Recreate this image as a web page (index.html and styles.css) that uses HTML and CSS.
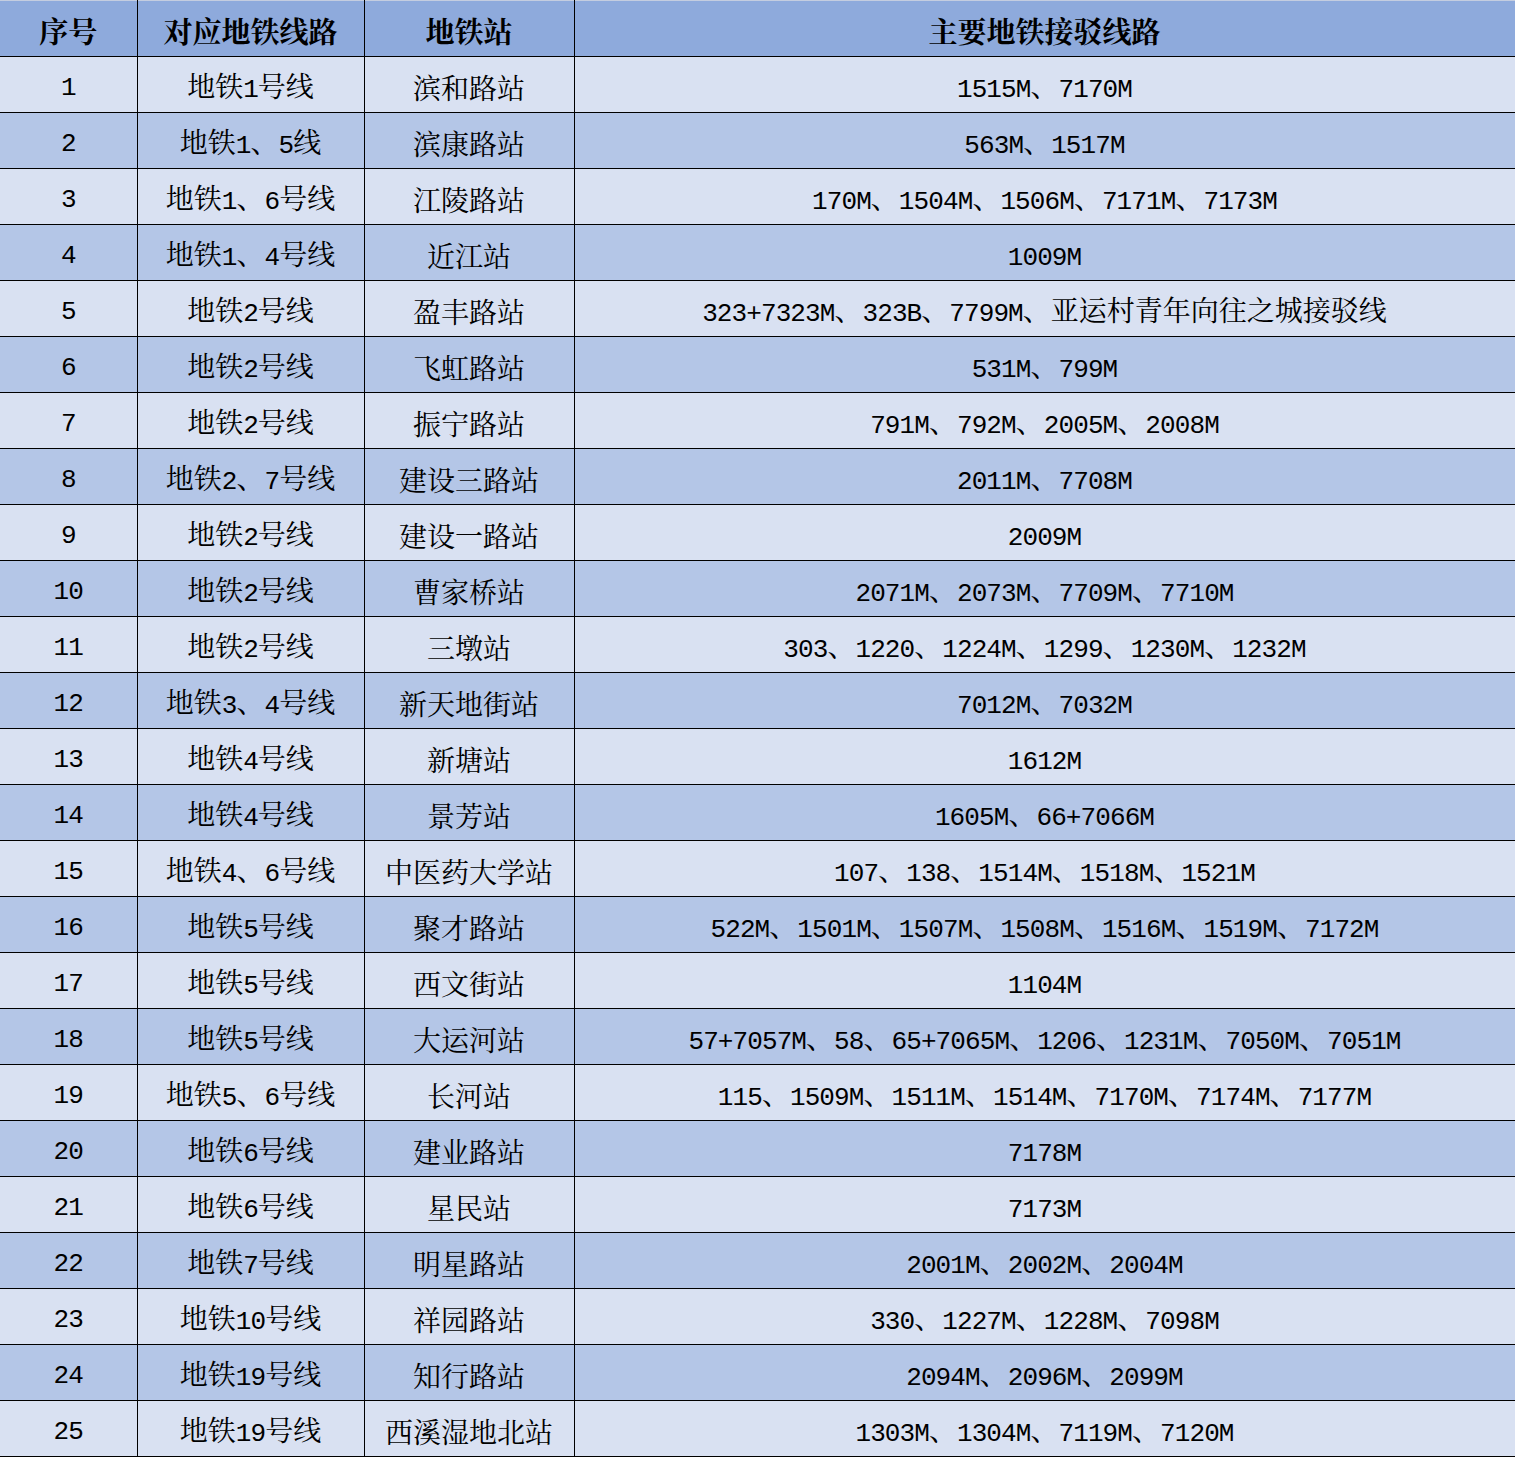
FILE: index.html
```html
<!DOCTYPE html>
<html lang="zh-CN">
<head>
<meta charset="utf-8">
<title>地铁接驳线路</title>
<link rel="stylesheet" href="styles.css">
</head>
<body>
<table class="grid">
  <colgroup>
    <col class="c1"><col class="c2"><col class="c3"><col class="c4">
  </colgroup>
  <thead>
    <tr><th>序号</th><th>对应地铁线路</th><th>地铁站</th><th>主要地铁接驳线路</th></tr>
  </thead>
  <tbody>
    <tr><td class="n">1</td><td>地铁<span class="n">1</span>号线</td><td>滨和路站</td><td><span class="n">1515M</span>、<span class="n">7170M</span></td></tr>
    <tr><td class="n">2</td><td>地铁<span class="n">1</span>、<span class="n">5</span>线</td><td>滨康路站</td><td><span class="n">563M</span>、<span class="n">1517M</span></td></tr>
    <tr><td class="n">3</td><td>地铁<span class="n">1</span>、<span class="n">6</span>号线</td><td>江陵路站</td><td><span class="n">170M</span>、<span class="n">1504M</span>、<span class="n">1506M</span>、<span class="n">7171M</span>、<span class="n">7173M</span></td></tr>
    <tr><td class="n">4</td><td>地铁<span class="n">1</span>、<span class="n">4</span>号线</td><td>近江站</td><td><span class="n">1009M</span></td></tr>
    <tr><td class="n">5</td><td>地铁<span class="n">2</span>号线</td><td>盈丰路站</td><td><span class="n">323+7323M</span>、<span class="n">323B</span>、<span class="n">7799M</span>、亚运村青年向往之城接驳线</td></tr>
    <tr><td class="n">6</td><td>地铁<span class="n">2</span>号线</td><td>飞虹路站</td><td><span class="n">531M</span>、<span class="n">799M</span></td></tr>
    <tr><td class="n">7</td><td>地铁<span class="n">2</span>号线</td><td>振宁路站</td><td><span class="n">791M</span>、<span class="n">792M</span>、<span class="n">2005M</span>、<span class="n">2008M</span></td></tr>
    <tr><td class="n">8</td><td>地铁<span class="n">2</span>、<span class="n">7</span>号线</td><td>建设三路站</td><td><span class="n">2011M</span>、<span class="n">7708M</span></td></tr>
    <tr><td class="n">9</td><td>地铁<span class="n">2</span>号线</td><td>建设一路站</td><td><span class="n">2009M</span></td></tr>
    <tr><td class="n">10</td><td>地铁<span class="n">2</span>号线</td><td>曹家桥站</td><td><span class="n">2071M</span>、<span class="n">2073M</span>、<span class="n">7709M</span>、<span class="n">7710M</span></td></tr>
    <tr><td class="n">11</td><td>地铁<span class="n">2</span>号线</td><td>三墩站</td><td><span class="n">303</span>、<span class="n">1220</span>、<span class="n">1224M</span>、<span class="n">1299</span>、<span class="n">1230M</span>、<span class="n">1232M</span></td></tr>
    <tr><td class="n">12</td><td>地铁<span class="n">3</span>、<span class="n">4</span>号线</td><td>新天地街站</td><td><span class="n">7012M</span>、<span class="n">7032M</span></td></tr>
    <tr><td class="n">13</td><td>地铁<span class="n">4</span>号线</td><td>新塘站</td><td><span class="n">1612M</span></td></tr>
    <tr><td class="n">14</td><td>地铁<span class="n">4</span>号线</td><td>景芳站</td><td><span class="n">1605M</span>、<span class="n">66+7066M</span></td></tr>
    <tr><td class="n">15</td><td>地铁<span class="n">4</span>、<span class="n">6</span>号线</td><td>中医药大学站</td><td><span class="n">107</span>、<span class="n">138</span>、<span class="n">1514M</span>、<span class="n">1518M</span>、<span class="n">1521M</span></td></tr>
    <tr><td class="n">16</td><td>地铁<span class="n">5</span>号线</td><td>聚才路站</td><td><span class="n">522M</span>、<span class="n">1501M</span>、<span class="n">1507M</span>、<span class="n">1508M</span>、<span class="n">1516M</span>、<span class="n">1519M</span>、<span class="n">7172M</span></td></tr>
    <tr><td class="n">17</td><td>地铁<span class="n">5</span>号线</td><td>西文街站</td><td><span class="n">1104M</span></td></tr>
    <tr><td class="n">18</td><td>地铁<span class="n">5</span>号线</td><td>大运河站</td><td><span class="n">57+7057M</span>、<span class="n">58</span>、<span class="n">65+7065M</span>、<span class="n">1206</span>、<span class="n">1231M</span>、<span class="n">7050M</span>、<span class="n">7051M</span></td></tr>
    <tr><td class="n">19</td><td>地铁<span class="n">5</span>、<span class="n">6</span>号线</td><td>长河站</td><td><span class="n">115</span>、<span class="n">1509M</span>、<span class="n">1511M</span>、<span class="n">1514M</span>、<span class="n">7170M</span>、<span class="n">7174M</span>、<span class="n">7177M</span></td></tr>
    <tr><td class="n">20</td><td>地铁<span class="n">6</span>号线</td><td>建业路站</td><td><span class="n">7178M</span></td></tr>
    <tr><td class="n">21</td><td>地铁<span class="n">6</span>号线</td><td>星民站</td><td><span class="n">7173M</span></td></tr>
    <tr><td class="n">22</td><td>地铁<span class="n">7</span>号线</td><td>明星路站</td><td><span class="n">2001M</span>、<span class="n">2002M</span>、<span class="n">2004M</span></td></tr>
    <tr><td class="n">23</td><td>地铁<span class="n">10</span>号线</td><td>祥园路站</td><td><span class="n">330</span>、<span class="n">1227M</span>、<span class="n">1228M</span>、<span class="n">7098M</span></td></tr>
    <tr><td class="n">24</td><td>地铁<span class="n">19</span>号线</td><td>知行路站</td><td><span class="n">2094M</span>、<span class="n">2096M</span>、<span class="n">2099M</span></td></tr>
    <tr><td class="n">25</td><td>地铁<span class="n">19</span>号线</td><td>西溪湿地北站</td><td><span class="n">1303M</span>、<span class="n">1304M</span>、<span class="n">7119M</span>、<span class="n">7120M</span></td></tr>
  </tbody>
</table>
</body>
</html>
```

FILE: styles.css
```css
html, body {
  margin: 0;
  padding: 0;
  background: #ffffff;
}

.grid {
  width: 1515px;
  table-layout: fixed;
  border-collapse: collapse;
  font-family: "Noto Serif CJK SC", "Noto Sans CJK SC", serif;
  font-size: 28px;
  color: #000;
}

.c1 { width: 137px; }
.c2 { width: 227px; }
.c3 { width: 210px; }
.c4 { width: 941px; }

.grid th,
.grid td {
  box-sizing: border-box;
  height: 56px;
  padding: 4px 0 0 0;
  text-align: center;
  vertical-align: middle;
  border-right: 1px solid #000;
  border-bottom: 1px solid #000;
  white-space: nowrap;
  line-height: 1;
}

.grid th {
  background: #8eaadc;
  font-weight: bold;
  font-size: 29px;
  border-top: 1px solid #c4cde0;
  padding-top: 3px;
}

.n {
  font-family: "Liberation Mono", "DejaVu Sans Mono", monospace;
  font-size: 26px;
  letter-spacing: -0.9px;
}

.grid tbody td.n {
  padding-top: 6px;
}

.grid tbody tr:nth-child(odd) td {
  background: #d9e1f2;
}

.grid tbody tr:nth-child(even) td {
  background: #b4c6e7;
}
```
